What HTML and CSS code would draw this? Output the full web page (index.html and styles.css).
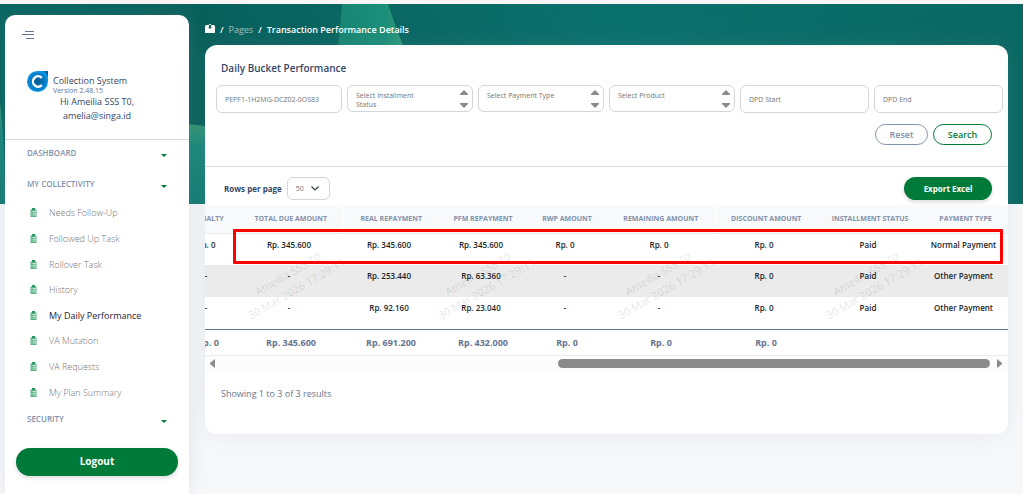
FILE: index.html
```html
<!DOCTYPE html>
<html lang="en">
<head>
    <meta charset="UTF-8">
    <meta name="viewport" content="width=device-width, initial-scale=1.0">
    <title>Collection System</title>
    <link rel="stylesheet" href="styles.css">
</head>

<body>
    <!-- Shared icons -->
    <svg class="sprite" aria-hidden="true">
        <symbol id="clipboard" viewBox="0 0 14 18">
            <path fill="#58b184" d="M1 3h3V1h6v2h3v15H1z" />
            <path fill="#2b9560" d="M4 0h6v4H4z" />
            <path fill="none" stroke="#e4f5ec" stroke-width="1.6" d="M3 7h2M6 7h6M3 10.500h2M6 10.500h6M3 14h2M6 14h6" />
        </symbol>
    </svg>

    <div class="page">
        <svg class="hero" viewBox="0 0 1023 200" preserveAspectRatio="none" aria-hidden="true">
            <defs>
                <linearGradient id="sea" x1="0" y1="0" x2="1" y2="0">
                    <stop offset="0" stop-color="#07655f" />
                    <stop offset=".2" stop-color="#08605b" />
                    <stop offset=".6" stop-color="#0b716d" />
                    <stop offset="1" stop-color="#096863" />
                </linearGradient>
                <linearGradient id="leaf" x1="0" y1="0" x2="0" y2="1">
                    <stop offset="0" stop-color="#329473" />
                    <stop offset=".3" stop-color="#17877a" />
                    <stop offset="1" stop-color="#117a72" />
                </linearGradient>
                <linearGradient id="fin" x1="0" y1="0" x2="1" y2="0">
                    <stop offset="0" stop-color="#178572" />
                    <stop offset=".7" stop-color="#1b8f79" />
                    <stop offset="1" stop-color="#329a7b" />
                </linearGradient>
            </defs>
            <rect width="1023" height="200" fill="url(#sea)" />
            <path fill="url(#leaf)" d="M0 98q5 40 5 102H0z" />
            <path fill="url(#leaf)" d="M180 120q14 0 30 3v77h-30z" />
            <path fill="url(#fin)" d="M342 0h46q7 22 16 44h-66z" />
        </svg>

        <div class="layout">
            <aside class="sidebar">
                <button class="toggle" type="button" aria-label="Toggle menu">
                    <svg width="12" height="8" viewBox="0 0 12 8"><path stroke="#67748e" d="M3 .5h9M0 3.500h12M4 7.500h8" /></svg>
                </button>

                <div class="brand">
                    <svg width="21" height="21" viewBox="0 0 21 21" aria-hidden="true">
                        <defs>
                            <radialGradient id="drop">
                                <stop offset="0" stop-color="#045c8e" />
                                <stop offset=".6" stop-color="#0676bd" />
                                <stop offset="1" stop-color="#0b95e8" />
                            </radialGradient>
                        </defs>
                        <path fill="url(#drop)" d="M10.500 0H21v10.500A10.500 10.500 0 1 1 10.500 0z" />
                        <path fill="#075f98" d="M17 0h4v5z" />
                        <path fill="none" stroke="#fff" stroke-width="2.400" d="M14.800 6.800A5.200 5.200 0 1 0 14.800 14.200" />
                    </svg>
                    <div>
                        <div class="brand-name">Collection System</div>
                        <div class="brand-version">Version 2.48.15</div>
                    </div>
                </div>
                <div class="user">Hi Ameilia SSS T0,<br>amelia@singa.id</div>

                <nav class="menu">
                    <button class="menu-title" type="button">DASHBOARD</button>
                    <button class="menu-title" type="button">MY COLLECTIVITY</button>
                    <ul class="menu-list">
                        <li><a href="#"><svg><use href="#clipboard" /></svg>Needs Follow-Up</a></li>
                        <li><a href="#"><svg><use href="#clipboard" /></svg>Followed Up Task</a></li>
                        <li><a href="#"><svg><use href="#clipboard" /></svg>Rollover Task</a></li>
                        <li><a href="#"><svg><use href="#clipboard" /></svg>History</a></li>
                        <li><a href="#" class="active"><svg><use href="#clipboard" /></svg>My Daily Performance</a></li>
                        <li><a href="#"><svg><use href="#clipboard" /></svg>VA Mutation</a></li>
                        <li><a href="#"><svg><use href="#clipboard" /></svg>VA Requests</a></li>
                        <li><a href="#"><svg><use href="#clipboard" /></svg>My Plan Summary</a></li>
                    </ul>
                    <button class="menu-title" type="button">SECURITY</button>
                </nav>
                <button class="logout" type="button">Logout</button>
            </aside>

            <main class="content">
                <nav class="breadcrumb">
                    <svg width="10" height="10" viewBox="0 0 10 10" aria-hidden="true">
                        <path fill="#fff" d="M0 2l1-1h8l1 1v7H0z" />
                        <path fill="#0a625f" d="M4 1h2v2h1L5 5 3 3h1z" />
                        <path fill="#d9ead0" d="M4 0h2v1H4z" />
                    </svg>
                    <span>/</span>
                    <a href="#">Pages</a>
                    <span>/</span>
                    <span>Transaction Performance Details</span>
                </nav>

                <section class="card">
                    <h1>Daily Bucket Performance</h1>

                    <form class="filters">
                        <input type="text" value="PEPF1-1H2MG-DCZ02-0OS83" aria-label="Contract number">
                        <div class="listbox">
                            <select size="2" aria-label="Installment status"><option>Select Installment Status</option></select>
                            <svg viewBox="0 0 8 18"><path d="M4 0l4 4v1H0V4zM4 18l4-4v-1H0v1z" /></svg>
                        </div>
                        <div class="listbox">
                            <select size="2" aria-label="Payment type"><option>Select Payment Type</option></select>
                            <svg viewBox="0 0 8 18"><path d="M4 0l4 4v1H0V4zM4 18l4-4v-1H0v1z" /></svg>
                        </div>
                        <div class="listbox">
                            <select size="2" aria-label="Product"><option>Select Product</option></select>
                            <svg viewBox="0 0 8 18"><path d="M4 0l4 4v1H0V4zM4 18l4-4v-1H0v1z" /></svg>
                        </div>
                        <input type="text" placeholder="DPD Start" aria-label="DPD Start">
                        <input type="text" placeholder="DPD End" aria-label="DPD End">
                    </form>

                    <div class="actions">
                        <button class="btn btn-reset" type="button">Reset</button>
                        <button class="btn btn-search" type="button">Search</button>
                    </div>

                    <div class="toolbar">
                        <label for="rows">Rows per page</label>
                        <div class="rows">
                            <select id="rows"><option>50</option></select>
                            <svg width="8" height="5" viewBox="0 0 8 5"><path fill="none" stroke="#344" stroke-width="1.200" d="M.5.5L4 4 7.500.5" /></svg>
                        </div>
                        <button class="btn btn-export" type="button">Export Excel</button>
                    </div>

                    <div class="table-area">
                        <div class="table-wrap">
                            <table>
                                <colgroup>
                                    <col class="w-penalty"><col class="w-due"><col class="w-real"><col class="w-pfm"><col class="w-rwp"><col class="w-remaining"><col class="w-discount"><col class="w-status"><col class="w-type">
                                </colgroup>
                                <thead>
                                    <tr>
                                        <th>PENALTY</th>
                                        <th class="split">TOTAL DUE AMOUNT</th>
                                        <th>REAL REPAYMENT</th>
                                        <th>PFM REPAYMENT</th>
                                        <th>RWP AMOUNT</th>
                                        <th class="split">REMAINING AMOUNT</th>
                                        <th>DISCOUNT AMOUNT</th>
                                        <th>INSTALLMENT STATUS</th>
                                        <th>PAYMENT TYPE</th>
                                    </tr>
                                </thead>
                                <tbody>
                                    <tr>
                                        <td>Rp. 0</td><td>Rp. 345.600</td><td>Rp. 345.600</td><td>Rp. 345.600</td><td>Rp. 0</td><td>Rp. 0</td><td>Rp. 0</td><td>Paid</td><td>Normal Payment</td>
                                    </tr>
                                    <tr>
                                        <td>-</td><td>-</td><td>Rp. 253.440</td><td>Rp. 63.360</td><td>-</td><td>-</td><td>Rp. 0</td><td>Paid</td><td>Other Payment</td>
                                    </tr>
                                    <tr>
                                        <td>-</td><td>-</td><td>Rp. 92.160</td><td>Rp. 23.040</td><td>-</td><td>-</td><td>Rp. 0</td><td>Paid</td><td>Other Payment</td>
                                    </tr>
                                </tbody>
                                <tfoot>
                                    <tr>
                                        <td>Rp. 0</td><td>Rp. 345.600</td><td>Rp. 691.200</td><td>Rp. 432.000</td><td>Rp. 0</td><td>Rp. 0</td><td>Rp. 0</td><td></td><td></td>
                                    </tr>
                                </tfoot>
                            </table>
                        </div>
                        <!-- User stamp over the rows -->
                        <div class="stamps">
                            <div class="stamp">Ameilia SSS T0<br>30 Mar 2026 17:29:11</div>
                            <div class="stamp">Ameilia SSS T0<br>30 Mar 2026 17:29:11</div>
                            <div class="stamp">Ameilia SSS T0<br>30 Mar 2026 17:29:11</div>
                            <div class="stamp">Ameilia SSS T0<br>30 Mar 2026 17:29:11</div>
                        </div>
                        <div class="highlight"></div>
                    </div>

                    <div class="scrollbar">
                        <svg width="5" height="9" viewBox="0 0 5 9"><path d="M5 0v9L0 5V4z" /></svg>
                        <div class="track"><div class="thumb"></div></div>
                        <svg width="5" height="9" viewBox="0 0 5 9"><path d="M0 0v9l5-4V4z" /></svg>
                    </div>

                    <p class="summary">Showing 1 to 3 of 3 results</p>
                </section>
            </main>
        </div>
    </div>
</body>
</html>
```
FILE: styles.css
```css
* {
    box-sizing: border-box;
}

body {
    margin: 0;
    font-family: 'Open Sans', sans-serif;
    font-size: 9px;
    color: #344767;
    background-color: #f7f8fa;
}

button, input, select {
    font-family: inherit;
    margin: 0;
}

button {
    border: none;
    background: none;
    padding: 0;
    cursor: pointer;
}

a {
    color: inherit;
    text-decoration: none;
}

.sprite {
    display: none;
}

/* The hero picture and the layout share one grid cell */
.page {
    display: grid;
    grid-template-columns: 100%;
    min-height: 100vh;
    border-top: 4px solid #faf6f5;
}

.hero {
    grid-area: 1 / 1;
    width: 100%;
    height: 200px;
}

.layout {
    grid-area: 1 / 1;
    display: flex;
    gap: 16px;
    padding: 11px 15px 0 5px;
}

/* Sidebar */
.sidebar {
    flex: none;
    width: 184px;
    background-color: #fff;
    border-radius: 10px 10px 0 0;
    box-shadow: 0 0 20px rgba(136, 152, 170, 0.2);
}

.toggle {
    display: block;
    padding: 16px 17px 8px;
}

.toggle svg {
    display: block;
}

.brand {
    display: flex;
    gap: 5px;
    padding: 24px 22px 0;
}

.brand-name {
    font-size: 9px;
    line-height: 10px;
    padding-top: 5px;
    font-weight: 500;
}

.brand-version {
    font-size: 7px;
    line-height: 9px;
    color: #67748e;
}

.user {
    padding-bottom: 16px;
    line-height: 14px;
    text-align: center;
    border-bottom: 1px solid #d5d9e0;
}

.menu-title {
    display: flex;
    justify-content: space-between;
    align-items: center;
    width: 100%;
    height: 31px;
    padding: 0 22px 6px;
    font-size: 8px;
    font-weight: 600;
    color: #8392ab;
}

.menu-title::after {
    content: "";
    margin-top: 5px;
    border: 3px solid transparent;
    border-top-color: #007a38;
    border-bottom: none;
}

.menu-list {
    display: grid;
    grid-template-rows: repeat(8, 1fr);
    height: 205px;
    margin: -1px 0 0;
    padding: 0;
    list-style: none;
}

.menu-list a {
    display: flex;
    align-items: center;
    gap: 12px;
    height: 100%;
    padding: 0 0 2px 25px;
    color: #757575;
    font-weight: 300;
}

.menu-list a.active {
    color: #1c232f;
    font-weight: 500;
}

.menu-list svg {
    width: 7px;
    height: 9px;
}

.logout {
    display: block;
    width: 162px;
    height: 28px;
    margin: 11px auto 0;
    padding-bottom: 2px;
    border-radius: 14px;
    background-color: #007a38;
    color: #fff;
    font-size: 10px;
    font-weight: 700;
    box-shadow: 0 2px 4px rgba(0, 0, 0, 0.15);
}

/* Content */
.content {
    flex: 1;
    min-width: 0;
}

.breadcrumb {
    display: flex;
    align-items: center;
    gap: 5px;
    height: 30px;
    padding-bottom: 2px;
    color: #fff;
    font-size: 9px;
    font-weight: 600;
}

.breadcrumb a {
    opacity: 0.6;
    font-weight: 400;
}

.card {
    background-color: #fff;
    border-radius: 12px;
    box-shadow: 0 0 24px rgba(136, 152, 170, 0.15);
}

h1 {
    margin: 0;
    padding: 16px 16px 10px;
    font-size: 10px;
    line-height: 14px;
    font-weight: 600;
}

.filters {
    display: grid;
    grid-template-columns: repeat(4, 126fr) repeat(2, 129fr);
    align-items: start;
    gap: 5px;
    padding: 0 5px 0 11px;
}

.filters input, .listbox, .rows {
    width: 100%;
    min-width: 0;
    border: 1px solid #d2d6da;
    border-radius: 6px;
    background-color: #fff;
}

.filters input {
    height: 28px;
    padding: 0 8px;
    font-size: 7px;
    color: #6c757d;
}

.filters input::placeholder {
    color: #757575;
    opacity: 1;
}

.listbox {
    display: flex;
    align-items: center;
    height: 27px;
    padding-right: 4px;
}

.listbox select {
    flex: 1;
    min-width: 0;
    height: 16px;
    padding: 0 34px 0 8px;
    border: none;
    background: none;
    overflow: hidden;
    font-size: 7px;
    color: #757575;
}

.listbox option {
    padding: 0;
    min-height: 0;
    line-height: 12px;
    white-space: normal;
}

.listbox svg {
    flex: none;
    width: 8px;
    height: 18px;
    fill: #8a8a8a;
}

.actions {
    display: flex;
    justify-content: flex-end;
    gap: 5px;
    padding: 11px 16px 21px;
    border-bottom: 1px solid #d9dce3;
}

.btn {
    height: 21px;
    border-radius: 12px;
    font-size: 9px;
    font-weight: 600;
}

.btn-reset {
    width: 53px;
    border: 1px solid #8392ab;
    color: #8392ab;
}

.btn-search {
    width: 59px;
    border: 1px solid #007a38;
    color: #007a38;
}

.toolbar {
    display: flex;
    align-items: center;
    gap: 5px;
    padding: 10px 16px 5px 19px;
    font-size: 8px;
    font-weight: 700;
}

.rows {
    display: flex;
    align-items: center;
    width: 43px;
    height: 23px;
    padding: 0 10px 0 8px;
}

.rows select {
    flex: 1;
    min-width: 0;
    padding: 0;
    border: none;
    background: none;
    appearance: none;
    font-size: 7px;
    color: #6c757d;
}

.btn-export {
    width: 88px;
    height: 23px;
    margin-left: auto;
    background-color: #007a38;
    color: #fff;
    font-size: 8px;
    font-weight: 700;
    box-shadow: 0 2px 4px rgba(0, 0, 0, 0.15);
}

/* Table, kept at the end of its horizontal scroll */
.table-area {
    position: relative;
}

.table-wrap {
    display: flex;
    justify-content: flex-end;
    overflow: hidden;
}

table {
    flex: none;
    width: 831px;
    min-width: 100%;
    table-layout: fixed;
    border-collapse: collapse;
}

.w-penalty { width: 62px; }
.w-due { width: 104px; }
.w-real { width: 96px; }
.w-pfm { width: 88px; }
.w-rwp { width: 80px; }
.w-remaining { width: 108px; }
.w-discount { width: 102px; }
.w-status { width: 106px; }
.w-type { width: 85px; }

th {
    height: 28px;
    padding: 0;
    background-color: #f8f9fa;
    border-bottom: 1px solid #e9ecef;
    font-size: 7px;
    font-weight: 700;
    color: #8392ab;
    white-space: nowrap;
}

th.split {
    border-right: 1px solid #fff;
}

td {
    padding: 5px 4px 0 0;
    text-align: center;
    white-space: nowrap;
}

tbody td {
    height: 32px;
    vertical-align: top;
    line-height: 12px;
    font-size: 8px;
    font-weight: 600;
    color: #212529;
}

tbody tr:nth-child(even) {
    background-color: #ebebeb;
}

tfoot td {
    height: 26px;
    padding: 0;
    border-top: 1px solid #67748e;
    border-bottom: 1px solid #e9ecef;
    font-size: 9px;
    font-weight: 700;
    color: #67748e;
}

.stamps {
    position: absolute;
    inset: 28px 78px 26px 27px;
    display: grid;
    grid-template-columns: 190fr 180fr 208fr 120fr;
    align-items: center;
    pointer-events: none;
}

.stamp {
    width: 120px;
    font-size: 11px;
    line-height: 17px;
    text-align: center;
    white-space: nowrap;
    color: rgba(0, 0, 0, 0.12);
    transform: rotate(-30deg);
}

.highlight {
    position: absolute;
    inset: 24px 5px auto 28px;
    height: 35px;
    border: 3px solid #fe0000;
    border-radius: 1px;
}

.scrollbar {
    display: flex;
    align-items: center;
    gap: 4px;
    height: 15px;
    padding: 0 6px 0 5px;
    background-color: #fcfcfc;
}

.scrollbar svg {
    flex: none;
    fill: #8a8a8a;
}

.track {
    flex: 1;
    padding-right: 3px;
}

.thumb {
    width: 56%;
    height: 9px;
    margin-left: auto;
    border-radius: 5px;
    background-color: #8b8b8b;
}

.summary {
    margin: 0;
    padding: 16px 16px 33px;
    line-height: 14px;
    color: #67748e;
}
```
